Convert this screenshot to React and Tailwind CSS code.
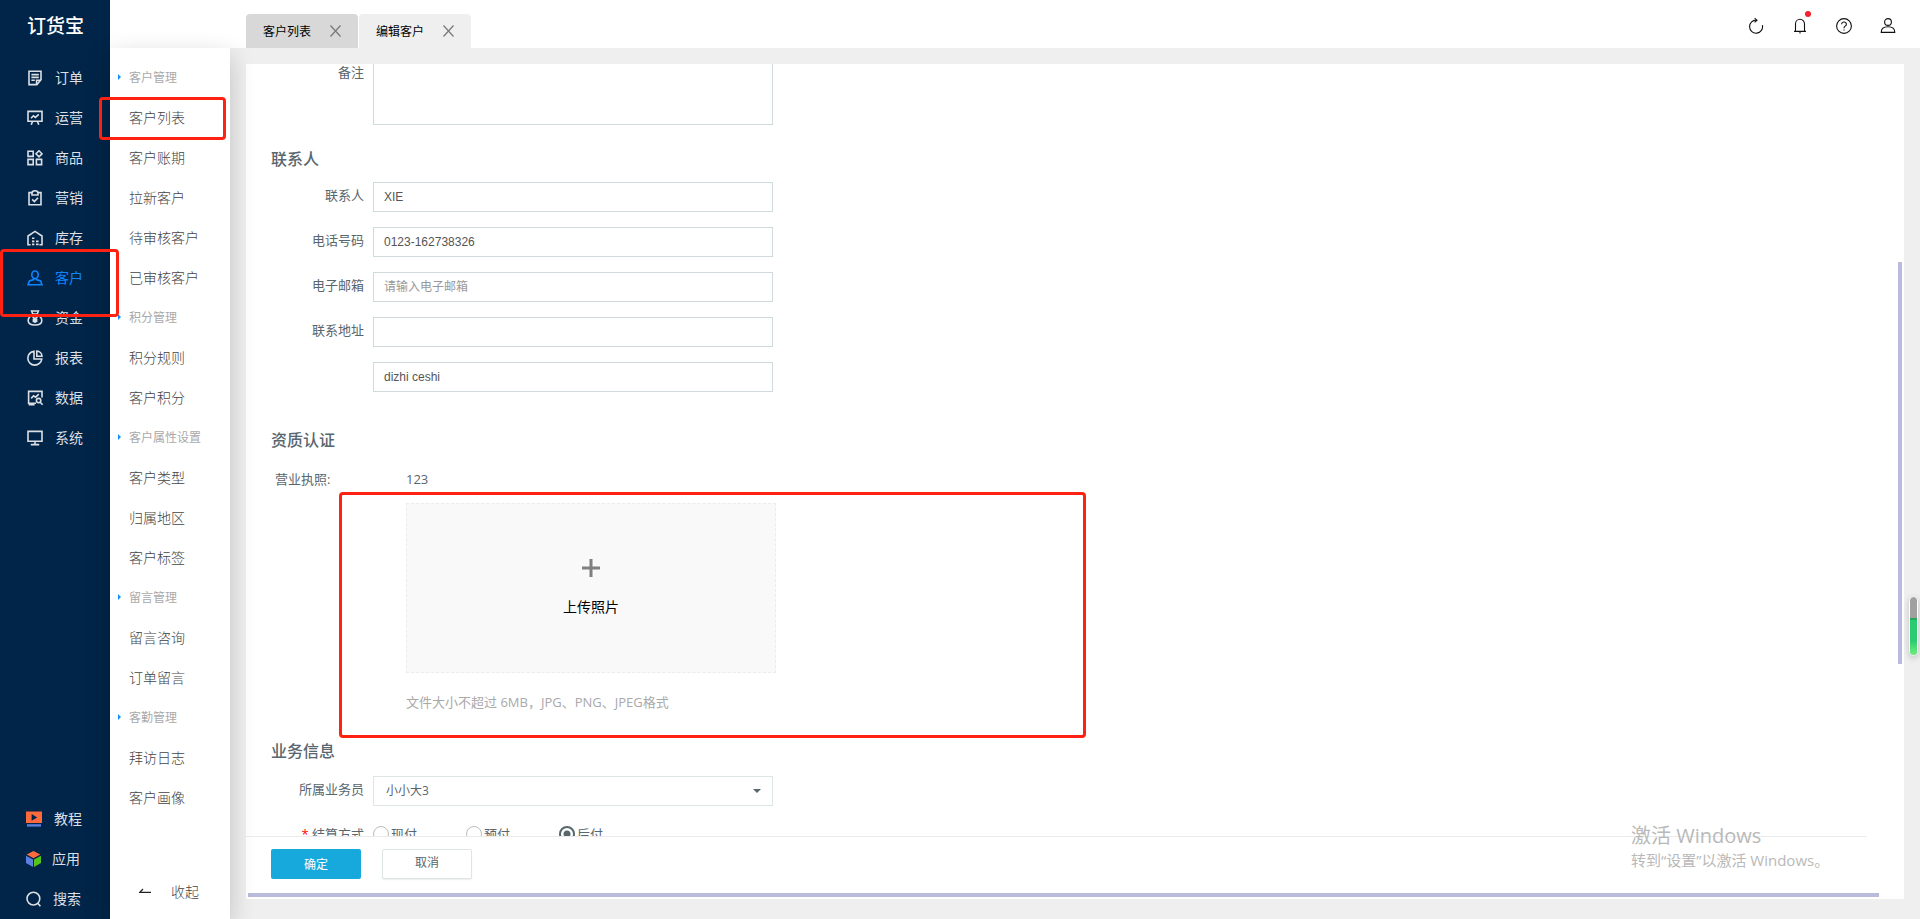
import { useState } from 'react'
import clsx from 'clsx'

const icons = {
  order: (
    <>
      <path d="M2 1.2h12v8.6l-4.2 4.8H2z" />
      <path d="M4.4 4.6h7.4M4.4 7.4h7.4M4.4 10.2h3.4" />
      <path d="M9.6 14.4v-4.2h4.2" />
    </>
  ),
  operate: (
    <>
      <path d="M1 1.4h14v9.8H1z" />
      <path d="M4 8.2l2.4-2.4 2 1.6 3.4-3M5.6 11.4l-1.4 3.4M10.4 11.4l1.4 3.4" />
    </>
  ),
  goods: (
    <>
      <path d="M1 1.2h5.2v5.2H1zM1 9.4h5.2v5.2H1zM9.4 9.4h5.2v5.2H9.4z" />
      <path d="M12 0.8l3 3-3 3-3-3z" />
    </>
  ),
  marketing: (
    <>
      <path d="M5 2.6H2v12.2h12V2.6h-3" />
      <path d="M5 5V3.2a3 2.4 0 0 1 6 0V5z" />
      <path d="M5.2 9.4l2.2 2.2 3.6-3.8" />
    </>
  ),
  stock: (
    <>
      <path d="M3.6 14.8H1V6l7-4.6L15 6v8.8h-2.6" />
      <path d="M5 8.2h2.4M5 11.4h2.4M5 14.4h2.4M9 11.4h2.6M9 14.4h2.6" />
    </>
  ),
  customer: (
    <>
      <ellipse cx="8" cy="4.8" rx="3.2" ry="3.8" />
      <path d="M6.6 8.4v1.2L2.4 11 1 14.8h14L13.6 11l-4.2-1.4V8.4" />
    </>
  ),
  fund: (
    <>
      <path d="M4.6 1h6.8l-1.2 3H5.8z" />
      <path d="M5.8 5h4.4c2.8 1 4.6 3 4.6 5.4 0 3-2 4.6-6.8 4.6s-6.8-1.6-6.8-4.6C1.2 8 3 6 5.8 5z" />
      <path d="M5.6 6.6L8 9l2.4-2.4M5.6 9.6h4.8M5.6 11.4h4.8M8 9v4" />
    </>
  ),
  report: (
    <>
      <path d="M7 1.2A7 7 0 1 0 14.8 9H7z" />
      <path d="M9.8 1v5.2H15A5.6 5.6 0 0 0 9.8 1z" />
    </>
  ),
  data: (
    <>
      <path d="M15 7.6V1.4H1.6v11.8H9M1.6 14.8h6" />
      <path d="M4.2 8.4l2.4-2.6 2 1.4 3.2-3" />
      <circle cx="11.6" cy="10.6" r="2.2" />
      <path d="M13.2 12.2l2.4 2.6" />
    </>
  ),
  system: (
    <>
      <path d="M1 1.4h14v9.8H1zM8 11.2v3.2M3.8 14.6h8.4" />
    </>
  ),
}

const mainMenu = [
  { key: 'order', label: '订单' },
  { key: 'operate', label: '运营' },
  { key: 'goods', label: '商品' },
  { key: 'marketing', label: '营销' },
  { key: 'stock', label: '库存' },
  { key: 'customer', label: '客户' },
  { key: 'fund', label: '资金' },
  { key: 'report', label: '报表' },
  { key: 'data', label: '数据' },
  { key: 'system', label: '系统' },
]

const subMenu = [
  { title: '客户管理', items: ['客户列表', '客户账期', '拉新客户', '待审核客户', '已审核客户'] },
  { title: '积分管理', items: ['积分规则', '客户积分'] },
  { title: '客户属性设置', items: ['客户类型', '归属地区', '客户标签'] },
  { title: '留言管理', items: ['留言咨询', '订单留言'] },
  { title: '客勤管理', items: ['拜访日志', '客户画像'] },
]

const inputClass =
  "block h-[30px] w-[400px] border border-[#cfdadd] bg-white px-[10px] font-['Liberation_Sans','Noto_Sans_CJK_SC',sans-serif] text-xs text-[#555] outline-none placeholder:text-[#999]"

function Sidebar() {
  return (
    <aside className="flex w-[110px] shrink-0 flex-col bg-[#002548] text-[#dcdfe3]">
      <h1 className="flex h-12 items-center pl-[27px] text-[19px] leading-none font-medium text-white">订货宝</h1>
      <nav className="mt-[10px] flex flex-col text-sm">
        {mainMenu.map((item) => (
          <a
            key={item.key}
            href="#"
            className={clsx('flex h-10 items-center gap-3 pl-[27px]', item.key === 'customer' && 'text-[#1085ff]')}
          >
            <svg viewBox="0 0 16 16" className="size-4" fill="none" stroke="currentColor" strokeWidth="1.6">
              {icons[item.key]}
            </svg>
            <span className="pb-0.5">{item.label}</span>
          </a>
        ))}
      </nav>
      <nav className="mt-auto flex flex-col text-sm">
        <a href="#" className="flex h-10 items-center gap-3 pl-[26px]">
          <svg viewBox="0 0 16 16" className="size-4">
            <path fill="#ff6a3d" d="M0 0.5h16V12H0z" />
            <path fill="#002548" d="M5.6 3l5.6 3.4-5.6 3.4z" />
            <path fill="#5b7fe0" d="M1 13.2h14v2.4H1z" />
          </svg>
          <span className="pb-0.5">教程</span>
        </a>
        <a href="#" className="flex h-10 items-center gap-[10px] pl-[26px]">
          <svg viewBox="0 0 16 16" className="size-4">
            <path fill="#ff6a3d" d="M7.5 0l6.8 3.6-6.8 3.6L0.7 3.6z" />
            <path fill="#5b7fe0" d="M0 4.7l7 3.7V16l-7-4z" />
            <path fill="#52c41a" d="M15 4.7L8 8.4V16l7-4z" />
          </svg>
          <span className="pb-0.5">应用</span>
        </a>
        <a href="#" className="flex h-10 items-center gap-[11px] pl-[26px]">
          <svg viewBox="0 0 16 16" className="size-4" fill="none" stroke="currentColor" strokeWidth="1.6">
            <circle cx="7.4" cy="7.6" r="6.4" />
            <path d="M11.8 12.2l2.6 3" />
          </svg>
          <span className="pb-0.5">搜索</span>
        </a>
      </nav>
    </aside>
  )
}

function SubMenu() {
  return (
    <nav className="z-10 flex w-[120px] shrink-0 flex-col bg-white pt-[9px] shadow-[0_8px_24px_rgba(0,0,0,0.2)]">
      {subMenu.map((group) => (
        <div key={group.title}>
          <p className="flex h-10 items-center pl-2 text-xs text-[#a9a9a9]">
            <svg viewBox="0 0 3 6" className="mr-2 h-[6px] w-[3px]">
              <path fill="#1890ff" d="M0 0l3 3-3 3z" />
            </svg>
            {group.title}
          </p>
          {group.items.map((item) => (
            <a key={item} href="#" className="flex h-10 items-center pl-[19px] text-sm font-light text-[#444]">
              {item}
            </a>
          ))}
        </div>
      ))}
      <button type="button" className="mt-auto mb-2 flex h-10 items-center gap-5 pl-[29px] text-sm font-light text-[#444]">
        <svg viewBox="0 0 12 6" className="h-[6px] w-3" fill="none" stroke="#222" strokeWidth="1.2">
          <path d="M12 4.4H0.8L4 1" />
        </svg>
        收起
      </button>
    </nav>
  )
}

function Tab({ label, active }) {
  return (
    <div
      className={clsx(
        'flex h-[34px] items-center gap-[19px] rounded-t px-[17px] text-xs text-black',
        active ? 'bg-[#efefef]' : 'bg-[#d8d8d8]',
      )}
    >
      <button type="button">{label}</button>
      <button type="button" aria-label="关闭">
        <svg viewBox="0 0 11 12" className="h-3 w-[11px]" fill="none" stroke="#777" strokeWidth="1.2">
          <path d="M0.5 0.5l10 11M10.5 0.5l-10 11" />
        </svg>
      </button>
    </div>
  )
}

function Header() {
  return (
    <header className="flex h-12 shrink-0 items-end justify-between bg-white pr-6 pl-[136px]">
      <div className="flex gap-px">
        <Tab label="客户列表" />
        <Tab label="编辑客户" active />
      </div>
      <div className="flex items-center gap-7 self-center pt-1">
        <button type="button" aria-label="刷新">
          <svg viewBox="0 0 16 16" className="size-4" fill="none" stroke="#111" strokeWidth="1.1">
            <path d="M8.6 2.2A6.5 6.5 0 1 0 14.4 7.2" />
            <path d="M6.6 0.2l2.4 2-2.4 2.2" />
          </svg>
        </button>
        <button type="button" aria-label="消息" className="relative">
          <svg viewBox="0 0 16 16" className="size-4" fill="none" stroke="#111" strokeWidth="1.1">
            <path d="M3.5 13.2V6a4.5 4.7 0 0 1 9 0v7.2M2 13.4h12M8 13.6v2" />
          </svg>
          <span className="absolute -top-[7px] -right-[3px] size-[6px] rounded-full bg-[#f5222d]"></span>
        </button>
        <button type="button" aria-label="帮助">
          <svg viewBox="0 0 16 16" className="size-4" fill="none" stroke="#111" strokeWidth="1.1">
            <circle cx="8" cy="8" r="7.4" />
            <path d="M5.6 6.2a2.4 2.2 0 1 1 3.6 1.9C8.2 8.7 8 9 8 10.2M8 11.4v1.2" />
          </svg>
        </button>
        <button type="button" aria-label="账户">
          <svg viewBox="0 0 16 16" className="size-4" fill="none" stroke="#111" strokeWidth="1.1">
            <circle cx="8" cy="4" r="3.4" />
            <path d="M1.2 14.4c0-3.4 2.4-5.6 6.8-5.6s6.8 2.2 6.8 5.6z" />
          </svg>
        </button>
      </div>
    </header>
  )
}

function FormRow({ label, htmlFor, required, children }) {
  return (
    <div className="flex items-start">
      <label htmlFor={htmlFor} className="mr-[9px] w-[93px] shrink-0 pt-[3px] text-right leading-5">
        {required && <span className="text-[#f00]">* </span>}
        {label}
      </label>
      {children}
    </div>
  )
}

function Radio({ label, checked, onChange }) {
  return (
    <label className="flex w-[93px] items-center gap-[2px]">
      <input
        type="radio"
        name="settle"
        checked={checked}
        onChange={onChange}
        className="size-4 appearance-none rounded-full border border-[#bbb] bg-white checked:border-2 checked:border-[#58666e] checked:bg-[radial-gradient(circle,#58666e_3px,#fff_4px)]"
      />
      {label}
    </label>
  )
}

function CustomerForm() {
  const [settle, setSettle] = useState('后付')

  return (
    <div className="min-h-0 flex-1 overflow-hidden pl-[25px] font-['Open_Sans','Noto_Sans_CJK_SC',sans-serif] text-[13px] text-[#58666e]">
      <div className="flex items-start">
        <label htmlFor="remark" className="mr-[9px] w-[93px] text-right leading-4">备注</label>
        <textarea id="remark" className="block h-[61px] w-[400px] resize-none border border-t-0 border-[#cfdadd] outline-none" />
      </div>

      <h2 className="mt-[22px] mb-[11px] text-base leading-6 font-medium">联系人</h2>
      <div className="flex flex-col gap-[15px]">
        <FormRow label="联系人" htmlFor="contact">
          <input id="contact" className={inputClass} defaultValue="XIE" />
        </FormRow>
        <FormRow label="电话号码" htmlFor="phone">
          <input id="phone" className={inputClass} defaultValue="0123-162738326" />
        </FormRow>
        <FormRow label="电子邮箱" htmlFor="email">
          <input id="email" className={inputClass} placeholder="请输入电子邮箱" />
        </FormRow>
        <FormRow label="联系地址" htmlFor="area">
          <input id="area" className={inputClass} />
        </FormRow>
        <FormRow>
          <input aria-label="详细地址" className={inputClass} defaultValue="dizhi ceshi" />
        </FormRow>
      </div>

      <h2 className="mt-9 mb-[17px] text-base leading-6 font-medium">资质认证</h2>
      <div className="flex pl-1 leading-5">
        <span className="w-[131px]">营业执照:</span>
        <span>123</span>
      </div>
      <div className="relative pl-[135px]">
        <button
          type="button"
          className="mt-[14px] flex h-[170px] w-[370px] flex-col items-center justify-center gap-5 border border-dashed border-[#ececec] bg-[#f9f9f9] text-sm text-black"
        >
          <svg viewBox="0 0 18 18" className="size-[18px]" stroke="#808080" strokeWidth="3">
            <path d="M0 9h18M9 0v18" />
          </svg>
          <span>上传照片</span>
        </button>
        <p className="mt-[19px] leading-5 text-[#a9a9a9]">文件大小不超过 6MB，JPG、PNG、JPEG格式</p>
        <div className="pointer-events-none absolute -top-[11px] -bottom-[26px] left-[68px] w-[747px] rounded border-3 border-[#ff2213]"></div>
      </div>

      <h2 className="mt-[27px] mb-[13px] text-base leading-6 font-medium">业务信息</h2>
      <FormRow label="所属业务员" htmlFor="salesman">
        <div className="relative">
          <select
            id="salesman"
            className="block h-[30px] w-[400px] appearance-none border border-[#dee5e7] bg-white pr-8 pl-3 text-xs text-[#58666e] outline-none"
          >
            <option>小小大3</option>
          </select>
          <svg viewBox="0 0 8 4" className="pointer-events-none absolute top-[13px] right-3 h-1 w-2">
            <path fill="#58666e" d="M0 0h8L4 4z" />
          </svg>
        </div>
      </FormRow>
      <div className="mt-[15px]">
        <FormRow label="结算方式" required>
          <div className="flex pt-[3px] leading-5">
            {['现付', '预付', '后付'].map((name) => (
              <Radio key={name} label={name} checked={settle === name} onChange={() => setSettle(name)} />
            ))}
          </div>
        </FormRow>
      </div>
    </div>
  )
}

export default function App() {
  return (
    <div className="relative flex h-screen overflow-hidden bg-[#efefef] font-['Noto_Sans_CJK_SC',sans-serif]">
      <Sidebar />
      <div className="flex min-w-0 flex-1 flex-col">
        <Header />
        <div className="flex min-h-0 flex-1">
          <SubMenu />
          <main className="flex min-w-0 flex-1 flex-col px-4 pt-4 pb-5">
            <div className="relative flex min-h-0 flex-1 flex-col bg-white">
              <CustomerForm />
              <footer className="shrink-0">
                <div className="mr-[38px] flex gap-[21px] border-t border-[#ebebeb] pt-3 pl-[25px] text-xs">
                  <button type="button" className="h-[30px] w-[90px] rounded-xs bg-[#17a9db] text-white">
                    确定
                  </button>
                  <button
                    type="button"
                    className="h-[30px] w-[90px] rounded-xs border border-[#dee5e7] bg-white pb-1 text-[#58666e] shadow-[0_1px_1px_rgba(90,90,90,0.1)]"
                  >
                    取消
                  </button>
                </div>
                <div className="mt-[14px] mr-[25px] mb-[2px] ml-[2px] h-1 bg-[#babadc]"></div>
              </footer>
              <div className="absolute top-[198px] right-[2px] h-[402px] w-1 bg-[#babadc]"></div>
            </div>
          </main>
        </div>
      </div>

      {/* highlight frames */}
      <div className="pointer-events-none absolute top-[97px] left-[99px] z-20 h-[43px] w-[127px] rounded border-3 border-[#ff2213]"></div>
      <div className="pointer-events-none absolute top-[249px] left-0 z-20 h-[68px] w-[119px] rounded border-3 border-[#ff2213]"></div>

      {/* floating meter */}
      <div className="absolute top-[596px] right-[2px] flex h-[60px] w-[9px] flex-col overflow-hidden rounded-full border border-white bg-[#a0a0a0] shadow-[0_2px_6px_rgba(0,0,0,0.2)]">
        <div className="mt-[21px] flex-1 border-t-2 border-[#25a85c] bg-linear-to-b from-[#2bcc71] from-60% to-[#6cf07c]"></div>
      </div>

      <div className="pointer-events-none absolute right-[93px] bottom-[47px] w-[196px] font-['Open_Sans','Noto_Sans_CJK_SC',sans-serif] whitespace-nowrap text-[#b9b9b9]">
        <p className="text-xl leading-6">激活 Windows</p>
        <p className="text-[15px] leading-6">转到“设置”以激活 Windows。</p>
      </div>
    </div>
  )
}
